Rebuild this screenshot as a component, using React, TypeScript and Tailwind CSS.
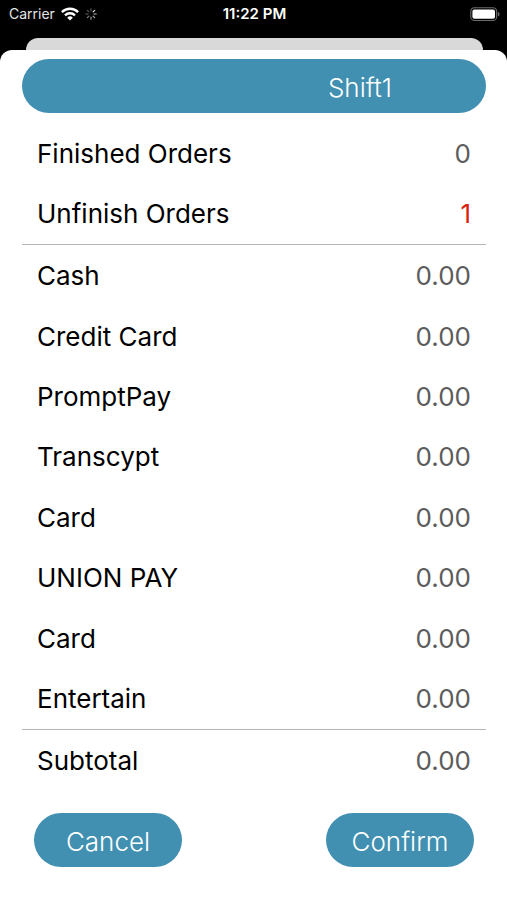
import React from 'react'


type SummaryRow = {
    label: string;
    value: string;
    alert?: boolean;
    divider?: boolean;
};

const rows: SummaryRow[] = [
    { label: 'Finished Orders', value: '0' },
    { label: 'Unfinish Orders', value: '1', alert: true, divider: true },
    { label: 'Cash', value: '0.00' },
    { label: 'Credit Card', value: '0.00' },
    { label: 'PromptPay', value: '0.00' },
    { label: 'Transcypt', value: '0.00' },
    { label: 'Card', value: '0.00' },
    { label: 'UNION PAY', value: '0.00' },
    { label: 'Card', value: '0.00' },
    { label: 'Entertain', value: '0.00', divider: true },
    { label: 'Subtotal', value: '0.00' },
];

const spokes = [
    { angle: 0, opacity: 0.35 },
    { angle: 45, opacity: 0.9 },
    { angle: 90, opacity: 0.75 },
    { angle: 135, opacity: 0.65 },
    { angle: 180, opacity: 0.6 },
    { angle: 225, opacity: 0.5 },
    { angle: 270, opacity: 0.4 },
    { angle: 315, opacity: 0.35 },
];

const StatusBar: React.FC = () => (
    <header className="grid h-[27px] grid-cols-3 items-center pl-[9px] pr-[7px] text-white">
        <div className="flex items-center gap-[6px]">
            <span className="text-sm text-[#e5e5e5]">Carrier</span>
            <svg aria-hidden="true" className="h-[14px] w-[18px]" viewBox="0 0 18 14" fill="none" stroke="currentColor" strokeWidth="2.4">
                <path d="M0.9 5.1a11.5 11.5 0 0 1 16.2 0" />
                <path d="M4 8.3a7.1 7.1 0 0 1 10 0" />
                <path d="M9 13.6 6.2 10.7a4 4 0 0 1 5.6 0Z" fill="currentColor" stroke="none" />
            </svg>
            <svg aria-hidden="true" className="h-3 w-3" viewBox="0 0 12 12" stroke="currentColor" strokeWidth="1.2" strokeLinecap="round">
                {spokes.map(({ angle, opacity }) => (
                    <path key={angle} d="M6 3V0.8" opacity={opacity} transform={`rotate(${angle} 6 6)`} />
                ))}
            </svg>
        </div>
        <span className="pt-0.5 text-center text-[15px] font-semibold">11:22 PM</span>
        <svg aria-hidden="true" className="h-[14px] w-[30px] justify-self-end" viewBox="0 0 30 14">
            <rect x="0.8" y="0.7" width="25.8" height="12.8" rx="3.6" fill="none" stroke="#6b6b6b" strokeWidth="1.1" />
            <rect x="2.4" y="2.4" width="22.6" height="9.4" rx="2" fill="#fff" />
            <path d="M27.8 5v4.4c1.2-.4 1.8-1.2 1.8-2.2s-.6-1.8-1.8-2.2Z" fill="#6b6b6b" />
        </svg>
    </header>
)

const PillButton: React.FC<{ children: React.ReactNode }> = ({ children }) => (
    <button type="button" className="h-[54px] w-[148px] rounded-full bg-[#4190b2] pt-0.5 text-[26px] font-light text-white">
        {children}
    </button>
)

const App: React.FC = () => {
    return (
        <div className="flex min-h-screen flex-col bg-black font-['Inter','Liberation_Sans',sans-serif]">
            <StatusBar />
            <div className="ml-[26px] mr-6 mt-[11px] h-3 rounded-t-xl bg-[#d9d9d9]" />

            <main className="flex flex-1 flex-col rounded-t-xl bg-white pl-[22px] pr-[21px] pt-[9px] pb-[33px]">
                <div className="grid h-[54px] grid-cols-2 items-center rounded-full bg-[#4190b2]">
                    <h1 className="col-start-2 pt-0.5 pr-5 text-center text-[26px] font-light text-white">Shift1</h1>
                </div>

                <table className="mt-[10px] w-full flex-1 border-collapse text-[26px] leading-8">
                    <tbody>
                        {rows.map((row, index) => (
                            <tr key={index} className={row.divider ? 'border-b border-[#b4b4b4]' : ''}>
                                <th scope="row" className="pt-px pl-[15px] text-left font-normal text-black">{row.label}</th>
                                <td className={row.alert ? 'pt-px pr-[15px] text-right text-[#d8230f]' : 'pt-px pr-[15px] text-right text-[#5c5c5c]'}>
                                    {row.value}
                                </td>
                            </tr>
                        ))}
                    </tbody>
                </table>

                <div className="mt-[22px] flex justify-between px-3">
                    <PillButton>Cancel</PillButton>
                    <PillButton>Confirm</PillButton>
                </div>
            </main>
        </div>
    )
}

export default App
